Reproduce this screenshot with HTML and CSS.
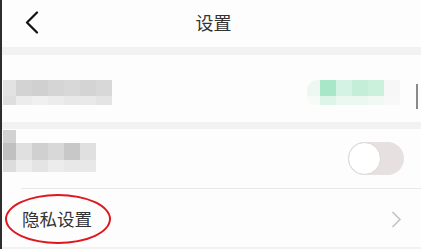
FILE: index.html
```html
<!DOCTYPE html>
<html lang="zh">
<head>
<meta charset="utf-8">
<title>设置</title>
<link rel="stylesheet" href="styles.css">
</head>
<body>
<div class="page">
  <div class="edge"></div>
  <div class="main">
    <header class="header">
      <svg class="back" width="14" height="23" viewBox="0 0 14 23"><path d="M12 1.5 L2 11.5 L12 21.5" fill="none" stroke="#111" stroke-width="2.2" stroke-linecap="round" stroke-linejoin="round"/></svg>
      <h1 class="title">设置</h1>
    </header>
    <div class="band band-top"></div>
    <section class="row row1">
      <div class="mosaic mosaic-a">
        <i></i><i></i><i></i><i></i><i></i><i></i><i></i>
        <i></i><i></i><i></i><i></i><i></i><i></i><i></i>
      </div>
      <div class="right1">
        <div class="mosaic mosaic-g">
          <i></i><i></i><i></i><i></i><i></i><i></i>
          <i></i><i></i><i></i><i></i><i></i><i></i>
        </div>
        <div class="bar"></div>
      </div>
    </section>
    <div class="band band-mid"></div>
    <section class="row row2">
      <div class="mosaic mosaic-b">
        <i></i><i></i><i></i><i></i><i></i><i></i>
        <i></i><i></i><i></i><i></i><i></i><i></i>
        <i></i><i></i><i></i><i></i><i></i><i></i>
      </div>
      <div class="toggle"><div class="knob"></div></div>
    </section>
    <section class="row row3">
      <span class="label">隐私设置</span>
      <svg class="chev" width="11" height="17" viewBox="0 0 11 17"><path d="M1.5 1 L9 8.5 L1.5 16" fill="none" stroke="#c4c4c4" stroke-width="1.6"/></svg>
      <div class="ellipse"></div>
    </section>
    <div class="band band-bottom"></div>
  </div>
</div>
</body>
</html>
```
FILE: styles.css
```css
* { box-sizing: border-box; }
html, body { margin: 0; padding: 0; }
body {
  background: #fdfdfd;
  font-family: "Noto Sans CJK SC", "Noto Sans", sans-serif;
  color: #333;
  width: 421px;
  height: 249px;
  overflow: hidden;
}
.page { display: flex; height: 249px; }
.edge { width: 2px; background: #2e2e2e; flex: none; }
.main { flex: 1; display: flex; flex-direction: column; background: #fdfdfd; }

.header {
  height: 47px;
  position: relative;
  display: flex;
  align-items: center;
  padding-left: 23px;
  padding-bottom: 3px;
}
.back { display: block; margin-top: 1px; }
.title {
  position: absolute;
  left: 0; right: 0; top: 0;
  margin: 0;
  text-align: center;
  font-size: 18px;
  font-weight: 400;
  line-height: 44px;
  color: #333;
  padding-left: 4px;
}

.band { background: #f2f2f2; flex: none; }
.band-top { height: 8px; }
.band-mid { height: 7px; }
.band-bottom { flex: 1; }

.row { position: relative; display: flex; background: #fdfdfd; }
.row1 { height: 67px; padding-left: 1px; padding-top: 25px; justify-content: space-between; align-items: flex-start; }
.row2 { height: 60px; padding-left: 1px; padding-top: 1px; justify-content: space-between; align-items: flex-start; }
.row2::after {
  content: "";
  position: absolute;
  left: 19px; right: 0; bottom: 0;
  height: 1px;
  background: #e8e8e8;
}
.row3 { height: 58px; align-items: center; padding-left: 20px; padding-right: 19px; justify-content: space-between; }

.mosaic { display: grid; }
.mosaic i { display: block; }

.mosaic-a { grid-template-columns: 13px repeat(6, 16px); grid-template-rows: 16px 9px; margin-top: 0; }
.mosaic-a i:nth-child(1) { background: #e2e2e2; }
.mosaic-a i:nth-child(2) { background: #d3d3d3; }
.mosaic-a i:nth-child(3) { background: #d0d0d0; }
.mosaic-a i:nth-child(4) { background: #d5d5d5; }
.mosaic-a i:nth-child(5) { background: #d8d8d8; }
.mosaic-a i:nth-child(6) { background: #d4d4d4; }
.mosaic-a i:nth-child(7) { background: #d8d8d8; }
.mosaic-a i:nth-child(8) { background: #dedede; }
.mosaic-a i:nth-child(9) { background: #ececec; }
.mosaic-a i:nth-child(10) { background: #f0f0f0; }
.mosaic-a i:nth-child(11) { background: #ececec; }
.mosaic-a i:nth-child(12) { background: #e8e8e8; }
.mosaic-a i:nth-child(13) { background: #e9e9e9; }
.mosaic-a i:nth-child(14) { background: #e4e4e4; }

.right1 { display: flex; align-items: flex-start; gap: 16px; margin-right: 3px; }
.mosaic-g { grid-template-columns: 13px repeat(5, 16px); grid-template-rows: 16px 9px; }
.mosaic-g i:nth-child(1) { background: #eef8f3; border-top-left-radius: 10px; }
.mosaic-g i:nth-child(2) { background: #a8e8c8; }
.mosaic-g i:nth-child(3) { background: #d5f3e4; }
.mosaic-g i:nth-child(4) { background: #c4eed8; }
.mosaic-g i:nth-child(5) { background: #cbf0dc; }
.mosaic-g i:nth-child(6) { background: #f7f7f7; }
.mosaic-g i:nth-child(7) { background: #f6fbf8; border-bottom-left-radius: 8px; }
.mosaic-g i:nth-child(8) { background: #dcf5e8; }
.mosaic-g i:nth-child(9) { background: #eaf8f1; }
.mosaic-g i:nth-child(10) { background: #eaf8f1; }
.mosaic-g i:nth-child(11) { background: #f0f9f4; }
.mosaic-g i:nth-child(12) { background: #f8f8f8; }
.bar { width: 2px; height: 25px; margin-top: 4px; background: #8a8a8a; }

.mosaic-b { grid-template-columns: 13px repeat(5, 16px); grid-template-rows: 13px 17px 12px; }
.mosaic-b i:nth-child(1) { background: #d2d2d2; }
.mosaic-b i:nth-child(7) { background: #c0c0c0; }
.mosaic-b i:nth-child(8) { background: #e0e0e0; }
.mosaic-b i:nth-child(9) { background: #d0d0d0; }
.mosaic-b i:nth-child(10) { background: #d8d8d8; }
.mosaic-b i:nth-child(11) { background: #c8c8c8; }
.mosaic-b i:nth-child(12) { background: #e0e0e0; }
.mosaic-b i:nth-child(13) { background: #dcdcdc; }
.mosaic-b i:nth-child(14) { background: #ececec; }
.mosaic-b i:nth-child(15) { background: #e4e4e4; }
.mosaic-b i:nth-child(16) { background: #ececec; }
.mosaic-b i:nth-child(17) { background: #e8e8e8; }
.mosaic-b i:nth-child(18) { background: #e8e8e8; }

.toggle {
  width: 56px;
  height: 33px;
  border-radius: 17px;
  background: #e6e0e0;
  margin-top: 12px;
  margin-right: 17px;
  position: relative;
}
.knob {
  width: 33px;
  height: 33px;
  border-radius: 50%;
  background: #fff;
  border: 1px solid #dcd6d6;
}

.label { font-size: 17.5px; line-height: 24px; color: #333; margin-top: 1px; }
.chev { display: block; margin-top: 2px; }
.ellipse {
  position: absolute;
  left: 3px;
  top: 5px;
  width: 106px;
  height: 50px;
  border: 2px solid #e0161f;
  border-radius: 50%;
}
```
